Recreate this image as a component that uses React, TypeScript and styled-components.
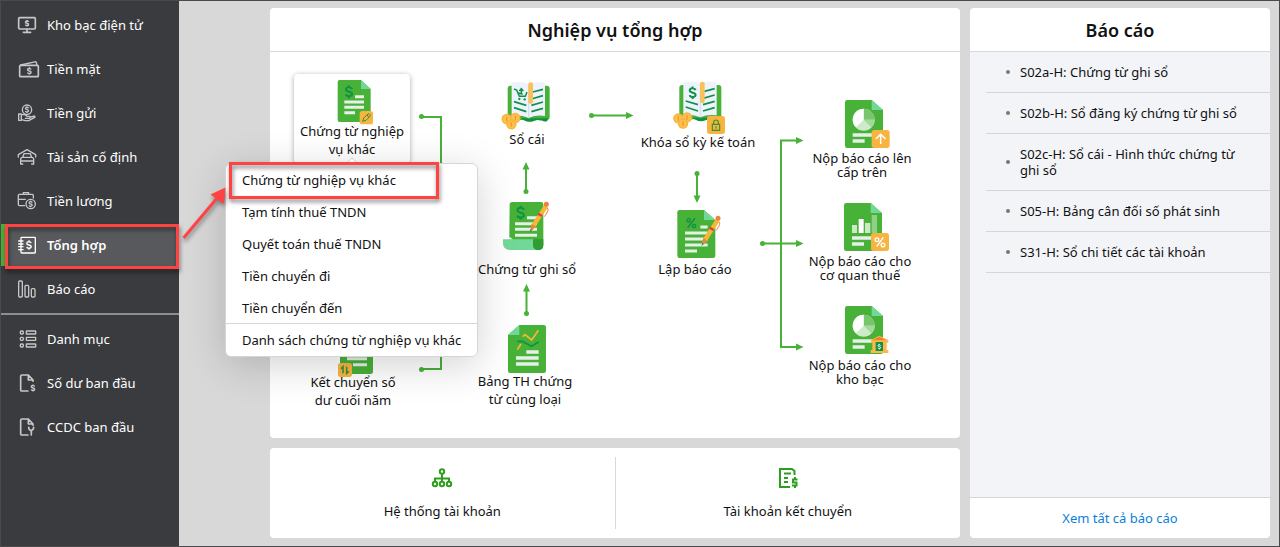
import React from 'react';
import styled, { createGlobalStyle, css } from 'styled-components';

const green = '#48b138';
const mint = '#72d898';
const deep = '#109246';
const amber = '#f8b637';
const pale = '#e6efe8';
const red = '#ff4343';

const GlobalStyle = createGlobalStyle`
  *, *::before, *::after { box-sizing: border-box; }
  body {
    margin: 0;
    font-family: "Noto Sans", "Open Sans", sans-serif;
    font-size: 13px;
    line-height: 18px;
    color: #111;
    background: #d8d8d8;
  }
  button {
    font: inherit;
    color: inherit;
    border: 0;
    padding: 0;
    margin: 0;
    background: none;
    cursor: pointer;
  }
  a { text-decoration: none; color: inherit; }
  ul { list-style: none; margin: 0; padding: 0; }
  h2 { margin: 0; }
`;

const Shell = styled.div`
  display: grid;
  grid-template-columns: 178px minmax(0, 1fr);
  min-height: 100vh;
  border: 1px solid #4a494b;
`;

const Sidebar = styled.nav`
  display: flex;
  flex-direction: column;
  gap: 2px;
  padding-top: 3px;
  background: #3a3b3e;
`;

const SideDivider = styled.hr`
  width: 100%;
  height: 2px;
  margin: 1px 0;
  border: 0;
  background: #8e8f93;
`;

const SideLink = styled.a<{ $active?: boolean }>`
  position: relative;
  display: flex;
  align-items: center;
  gap: 7px;
  height: 42px;
  padding-left: 15px;
  color: #fff;
  ${(p) =>
    p.$active &&
    css`
      font-weight: 600;
      background: #58595c;
      box-shadow: inset 4px 0 0 ${green};
    `}
`;

const SideIcon = styled.svg<{ $bright?: boolean }>`
  flex: none;
  width: 24px;
  height: 20px;
  fill: none;
  stroke: ${(p) => (p.$bright ? '#fff' : '#c6c7c9')};
  stroke-width: 5;
  stroke-linejoin: round;
  stroke-linecap: round;
`;

const Marker = styled.span`
  position: absolute;
  border: 3px solid ${red};
  filter: drop-shadow(1px 3px 2px rgba(0, 0, 0, 0.5));
  pointer-events: none;
`;

const SideMarker = styled(Marker)`
  inset: 0 0 -3px 4px;
`;

const MenuMarker = styled(Marker)`
  left: 3px;
  top: -2px;
  width: 210px;
  height: 37px;
`;

const Main = styled.main`
  display: grid;
  grid-template-columns: minmax(0, 1fr) 300px;
  gap: 10px;
  padding: 7px 9px 8px 91px;
`;

const Workspace = styled.div`
  display: flex;
  flex-direction: column;
  gap: 10px;
`;

const Panel = styled.section`
  display: flex;
  flex-direction: column;
  border-radius: 4px;
  background: #fff;
`;

const ProcessPanel = styled(Panel)`
  flex: 1;
`;

const PanelTitle = styled.h2`
  padding: 10px 0 9px;
  border-bottom: 1px solid #d9d9d9;
  font-size: 18px;
  line-height: 24px;
  font-weight: 600;
  text-align: center;
`;

const Canvas = styled.div`
  position: relative;
  width: 690px;
  height: 386px;
  margin: 0 auto;
`;

const Wires = styled.svg`
  position: absolute;
  inset: 0;
  width: 690px;
  height: 386px;
  fill: none;
  stroke: ${green};
  stroke-width: 2;
`;

const NodeButton = styled.button<{ $x: number; $y: number; $raised?: boolean; $tight?: boolean }>`
  position: absolute;
  left: ${(p) => p.$x}px;
  top: ${(p) => p.$y}px;
  display: flex;
  flex-direction: column;
  align-items: center;
  width: 116px;
  line-height: ${(p) => (p.$tight ? 14 : 18)}px;
  text-align: center;
  white-space: pre-line;
  ${(p) =>
    p.$raised &&
    css`
      height: 89px;
      padding-top: 6px;
      border-radius: 4px;
      background: #fff;
      box-shadow: 0 1px 5px rgba(0, 0, 0, 0.35);
    `}
`;

const NodeArt = styled.svg<{ $h: number }>`
  flex: none;
  width: 60px;
  height: ${(p) => p.$h}px;
  overflow: visible;
`;

const Menu = styled.div`
  position: absolute;
  left: -45px;
  top: 111px;
  z-index: 2;
  width: 253px;
  border: 1px solid #d6d6d6;
  border-radius: 6px;
  background: #fff;
  box-shadow: 0 8px 40px rgba(0, 0, 0, 0.18);
  &::before {
    content: '';
    position: absolute;
    left: 122px;
    top: -5px;
    width: 8px;
    height: 8px;
    border: 1px solid #d6d6d6;
    border-right: 0;
    border-bottom: 0;
    background: #fff;
    transform: rotate(45deg);
  }
`;

const MenuItem = styled.button<{ $ruled?: boolean }>`
  position: relative;
  display: block;
  width: 100%;
  height: 32px;
  padding: 0 16px;
  text-align: left;
  white-space: nowrap;
  border-bottom: ${(p) => (p.$ruled ? '1px solid #d6d6d6' : '0')};
`;

const Pointer = styled.svg`
  position: absolute;
  left: -90px;
  top: 130px;
  z-index: 3;
  width: 50px;
  height: 60px;
  filter: drop-shadow(1px 3px 2px rgba(0, 0, 0, 0.4));
  pointer-events: none;
`;

const ShortcutPanel = styled(Panel)`
  flex-direction: row;
  height: 90px;
  padding: 9px 0;
`;

const Shortcut = styled.button`
  flex: 1;
  display: flex;
  flex-direction: column;
  align-items: center;
  gap: 12px;
  padding-top: 9px;
  &:first-child {
    border-right: 1px solid #d9d9d9;
  }
`;

const ShortcutIcon = styled.svg`
  width: 24px;
  height: 24px;
  fill: none;
  stroke: #2ca01c;
  stroke-width: 2;
`;

const ReportList = styled.ul`
  flex: 1;
  padding-left: 16px;
  background: #f3f4f8;
`;

const ReportItem = styled.li`
  border-bottom: 1px solid #d6d6d6;
`;

const ReportLink = styled.a`
  display: flex;
  align-items: center;
  gap: 10px;
  padding: 12px 24px 12px 20px;
  line-height: 16px;
  &::before {
    content: '';
    flex: none;
    width: 4px;
    height: 4px;
    border-radius: 50%;
    background: #777;
  }
`;

const ReportFooter = styled.footer`
  padding: 11px 0;
  border-top: 1px solid #d6d6d6;
  text-align: center;
  color: #0a7fd9;
`;

/* ---------- drawing helpers ---------- */

const Dollar = ({ x, y, s = 1, w = 4, c }: { x: number; y: number; s?: number; w?: number; c?: string }) => (
  <path
    d="M7 -6C5 -12 -7 -12 -7 -5C-7 2 7 -2 7 5C7 12 -6 12 -7 6M0 -15V-10M0 10V15"
    transform={`translate(${x} ${y}) scale(${s})`}
    fill="none"
    stroke={c}
    strokeWidth={w / s}
    strokeLinecap="butt"
  />
);

const Sheet = ({ x, y, w = 114, h = 144 }: { x: number; y: number; w?: number; h?: number }) => (
  <>
    <path
      d={`M${x + 7} ${y}H${x + w - 34}L${x + w} ${y + 30}V${y + h - 7}q0 7 -7 7H${x + 7}q-7 0 -7 -7V${y + 7}q0 -7 7 -7Z`}
      fill={green}
    />
    <path d={`M${x + w - 34} ${y}L${x + w} ${y + 30}H${x + w - 34}Z`} fill={mint} />
  </>
);

const Pen = ({ x, y }: { x: number; y: number }) => (
  <g transform={`translate(${x} ${y})`}>
    <path d="M50 17L54 22Q56 28 43 45" fill="none" stroke="#f0803c" strokeWidth="3" />
    <path d="M43 9L54 16L16 76L2 88L4 69Z" fill={amber} />
    <path d="M26 33L38 40L34 46L22 39Z" fill="#e23c3c" />
    <path d="M5 67L16 74L8 84L1 88Z" fill="#f0803c" />
    <path d="M2 82L6 85L-1 91Z" fill={deep} />
    <circle cx="49" cy="8" r="7.500" fill="#f0803c" />
  </g>
);

const Coin = ({ x, y }: { x: number; y: number }) => (
  <g>
    <circle cx={x} cy={y} r="15.500" fill={amber} />
    <circle cx={x} cy={y} r="11" fill="#fcc054" />
    <path d={`M${x} ${y - 7}V${y + 7}`} stroke="#ee9a2e" strokeWidth="4" />
  </g>
);

const Book = ({ x, y, children }: { x: number; y: number; children?: React.ReactNode }) => (
  <g transform={`translate(${x} ${y})`}>
    <path d="M10 10H118Q127 10 127 18V104Q127 112 119 113H78Q64 120 50 113H10Q1 112 1 104V18Q1 10 10 10Z" fill={green} />
    <path d="M40 108H60Q64 112 70 108H122L120 116Q112 120 106 115L90 113L80 116Q64 122 50 114Z" fill={deep} />
    <path d="M13 1Q40 -4 64 5Q86 -4 113 1V101Q86 97 64 107Q40 97 13 101Z" fill="#eef2fc" />
    <path d="M64 5V106" stroke="#c4cfe2" strokeWidth="2" />
    <path
      d="M20 58L57 69M20 76L57 88M76 29L107 21M72 50L107 40M72 69L107 59M72 88L107 78"
      stroke={deep}
      strokeWidth="5"
    />
    <rect x="63" y="0" width="14" height="64" rx="6" fill="#fac05a" />
    {children}
    <Coin x={-2} y={110} />
    <Coin x={24} y={107} />
    <Coin x={12} y={126} />
  </g>
);

const Badge = ({ x, y, s = 54, children }: { x: number; y: number; s?: number; children?: React.ReactNode }) => (
  <g transform={`translate(${x} ${y})`}>
    <rect width={s} height={s} rx="8" fill="#f8b440" />
    {children}
  </g>
);

const Pie = ({ x, y }: { x: number; y: number }) => (
  <g transform={`translate(${x} ${y})`}>
    <circle r="33" fill="#cdebc8" />
    <path d="M0 0V-33A33 33 0 0 1 33 0Z" fill="#79c56e" />
    <path d="M0 0H33A33 33 0 0 1 23 23Z" fill="#a4d99c" />
    <path d="M0 0V-33A33 33 0 0 0 -23 23Z" fill="#fff" />
  </g>
);

const Bars = ({ d, w = 9 }: { d: string; w?: number }) => <path d={d} stroke={pale} strokeWidth={w} fill="none" />;

/* ---------- process nodes ---------- */

type NodeSpec = {
  label: string;
  x: number;
  y: number;
  h: number;
  box: string;
  raised?: boolean;
  tight?: boolean;
  art: React.ReactNode;
};

const nodes: NodeSpec[] = [
  {
    label: 'Chứng từ nghiệp\nvụ khác',
    x: 24, y: 22, h: 42, box: '186 240 180 126', raised: true,
    art: (
      <>
        <path d="M239 240H303L332 267V360q0 6 -6 6H239q-6 0 -6 -6V246q0 -6 6 -6Z" fill={green} />
        <path d="M303 240L332 267H303Z" fill={mint} />
        <Dollar x={267} y={275} s={1.3} w={6} c={deep} />
        <Bars d="M285 290H312M253 306H312M253 322H312M253 338H285" />
        <Badge x={299} y={333} s={40}>
          <path d="M9 31L12 21L25 9Q29 7 31 11Q33 14 30 17L19 28ZM22 12L28 19" fill="none" stroke="#3c8f32" strokeWidth="3" />
        </Badge>
      </>
    ),
  },
  {
    label: 'Kết chuyển số\ndư cuối năm',
    x: 25, y: 280, h: 41, box: '309 546 180 123',
    art: (
      <>
        <Sheet x={360} y={546} w={99} h={126} />
        <Bars d="M381 612H441M381 626H441M399 644H441" />
        <Badge x={354} y={639} s={42}>
          <path d="M15 31V11L9 17M26 11V31L32 25" fill="none" stroke="#2e8f3a" strokeWidth="4.500" />
        </Badge>
      </>
    ),
  },
  {
    label: 'Sổ cái',
    x: 199, y: 30, h: 48, box: '81 66 180 144',
    art: (
      <Book x={112} y={67}>
        <path d="M20 20L28 23L36 42H54L59 29M31 31L46 36M42 19V36M36 26L42 19L48 26" fill="none" stroke={deep} strokeWidth="4.500" />
        <circle cx="36" cy="50" r="3.500" fill={deep} />
        <circle cx="52" cy="51" r="3.500" fill={deep} />
      </Book>
    ),
  },
  {
    label: 'Khóa sổ kỳ kế toán',
    x: 370, y: 29, h: 52, box: '114 63 180 156',
    art: (
      <>
        <Book x={147} y={65}>
          <Dollar x={41} y={33} s={1.25} w={6} c={deep} />
        </Book>
        <Badge x={231} y={168}>
          <path d="M16 25H38V43H16ZM20 25V19Q20 12 27 12Q34 12 34 19V25M27 31V38" fill="none" stroke="#3c8f32" strokeWidth="3.500" />
        </Badge>
      </>
    ),
  },
  {
    label: 'Chứng từ ghi sổ',
    x: 199, y: 150, h: 58, box: '81 36 180 174',
    art: (
      <>
        <path d="M127 36H213Q220 36 220 43V165Q220 180 205 180H118V140L119 44Q119 36 127 36Z" fill={green} />
        <path d="M99 148H189V165Q189 178 203 180H118Q99 178 99 160Z" fill={mint} />
        <path d="M189 148H220V165Q220 180 205 180Q189 178 189 165Z" fill="#2f9c34" />
        <path d="M118 140L128 148H118Z" fill="#fff" />
        <Dollar x={152} y={68} s={1.4} w={6} c={deep} />
        <Bars d="M171 83H201M135 101H201M135 118H201M135 136H201" />
        <Pen x={180} y={35} />
      </>
    ),
  },
  {
    label: 'Lập báo cáo',
    x: 367, y: 158, h: 50, box: '105 450 180 150',
    art: (
      <>
        <Sheet x={142} y={450} />
        <path d="M173 503L195 475" stroke={deep} strokeWidth="4.500" />
        <circle cx="176" cy="481" r="5" fill="none" stroke={deep} strokeWidth="4" />
        <circle cx="192" cy="498" r="5" fill="none" stroke={deep} strokeWidth="4" />
        <Bars d="M211 501H233M165 519H233M165 537H233M165 555H233M165 573H201" />
        <Pen x={215} y={467} />
      </>
    ),
  },
  {
    label: 'Bảng TH chứng\ntừ cùng loại',
    x: 197, y: 273, h: 47, box: '75 405 180 141',
    art: (
      <>
        <path d="M148 405H221q7 0 7 7V542q0 7 -7 7H121q-7 0 -7 -7V435Z" fill={green} />
        <path d="M148 405V435H114Z" fill={mint} />
        <path d="M142 479L153 462M158 440L165 434L185 450L205 421" fill="none" stroke={amber} strokeWidth="5" />
        <path d="M141 454H157L184 469L206 456" fill="none" stroke={deep} strokeWidth="5" />
        <Bars d="M169 486H206M138 504H206M138 522H206" w={11} />
      </>
    ),
  },
  {
    label: 'Nộp báo cáo lên\ncấp trên',
    x: 534, y: 48, h: 51, box: '126 60 180 153', tight: true,
    art: (
      <>
        <Sheet x={165} y={60} />
        <Pie x={221} y={119} />
        <Bars d="M188 165H246M188 183H224" w={11} />
        <Badge x={245} y={150}>
          <path d="M27 42V14M12 27L27 13L42 27" fill="none" stroke="#fff" strokeWidth="4.500" />
        </Badge>
      </>
    ),
  },
  {
    label: 'Nộp báo cáo cho\ncơ quan thuế',
    x: 532, y: 151, h: 51, box: '120 369 180 153', tight: true,
    art: (
      <>
        <Sheet x={162} y={369} />
        <path d="M186 435H201V459H186ZM225 429H241V459H225Z" fill="#c9eac4" />
        <path d="M206 417H221V459H206Z" fill="#fff" />
        <path d="M245 405H261V459H245Z" fill="#90cf88" />
        <Bars d="M186 474H244M186 492H222" w={11} />
        <Badge x={243} y={459}>
          <path d="M17 41L37 13" stroke="#fff" strokeWidth="4.500" />
          <circle cx="18" cy="20" r="5.500" fill="none" stroke="#fff" strokeWidth="4" />
          <circle cx="36" cy="36" r="5.500" fill="none" stroke="#fff" strokeWidth="4" />
        </Badge>
      </>
    ),
  },
  {
    label: 'Nộp báo cáo cho\nkho bạc',
    x: 532, y: 254, h: 52, box: '120 108 180 156', tight: true,
    art: (
      <>
        <Sheet x={165} y={108} />
        <Pie x={221} y={167} />
        <Bars d="M188 213H246M188 231H224" w={11} />
        <path d="M242 249V240H247V218H243V210L268 197L295 210V218H290V240H295V249Z" fill="#fbb84c" />
        <path d="M248 211L268 200L289 211Z" fill="#ee7f2d" />
        <rect x="257" y="216" width="22" height="27" fill={deep} />
        <Dollar x={268} y={230} s={0.55} w={3} c="#fff" />
      </>
    ),
  },
];

/* ---------- sidebar ---------- */

const SmallCoin = ({ x, y, r }: { x: number; y: number; r: number }) => (
  <>
    <circle cx={x} cy={y} r={r} strokeWidth="4" />
    <Dollar x={x} y={y} s={r / 21} w={4} />
  </>
);

const sideItems: { label: string; box: string; active?: boolean; divided?: boolean; art: React.ReactNode }[] = [
  {
    label: 'Kho bạc điện tử', box: '48 45 72 60',
    art: (
      <>
        <rect x="56" y="53" width="50" height="34" rx="3" />
        <path d="M81 88V97M70 97H92" />
        <Dollar x={81} y={70} s={0.65} w={4.5} />
      </>
    ),
  },
  {
    label: 'Tiền mặt', box: '48 177 72 60',
    art: (
      <>
        <rect x="59" y="196" width="56" height="34" rx="3" />
        <path d="M62 195L108 185L111 195" strokeWidth="4" />
        <Dollar x={88} y={213} s={0.75} w={4.5} />
      </>
    ),
  },
  {
    label: 'Tiền gửi', box: '48 309 72 60',
    art: (
      <>
        <SmallCoin x={81} y={329} r={14} />
        <path
          d="M56 342H64V361H56ZM64 344H74L82 349H90Q93 353 89 355H76M90 352L103 348Q107 350 103 353L86 362H76L64 359"
          strokeWidth="4"
        />
      </>
    ),
  },
  {
    label: 'Tài sản cố định', box: '48 441 72 60',
    art: (
      <path
        d="M55 471V464L81 449L107 464V471M68 472L72 461H91L95 472M62 491V477Q63 472 68 472H95Q100 472 101 477V491M62 483H101M62 492H68M95 492H101"
        strokeWidth="4"
      />
    ),
  },
  {
    label: 'Tiền lương', box: '48 573 72 60',
    art: (
      <>
        <path d="M74 617H58Q55 617 55 613V586Q55 583 58 583H97Q100 583 100 586V594M70 582V578H86V582M56 598H76" strokeWidth="4" />
        <SmallCoin x={92} y={612} r={14} />
      </>
    ),
  },
  {
    label: 'Tổng hợp', box: '48 60 72 60', active: true,
    art: (
      <>
        <rect x="63" y="67" width="43" height="47" rx="2" strokeWidth="4" />
        <path d="M56 78H69M56 87H69M56 95H69M56 104H69" strokeWidth="4" />
        <Dollar x={87} y={90} s={0.95} w={4} />
      </>
    ),
  },
  {
    label: 'Báo cáo', box: '48 192 72 60',
    art: (
      <>
        <rect x="56" y="198" width="11" height="48" rx="3" strokeWidth="4" />
        <rect x="75" y="211" width="11" height="35" rx="3" strokeWidth="4" />
        <rect x="94" y="221" width="11" height="25" rx="3" strokeWidth="4" />
      </>
    ),
  },
  {
    label: 'Danh mục', box: '48 342 72 60', divided: true,
    art: (
      <>
        {[348, 367, 387].map((y) => (
          <React.Fragment key={y}>
            <rect x="61" y={y} width="9" height="9" rx="3" strokeWidth="4" />
            <rect x="79" y={y} width="28" height="9" rx="1" strokeWidth="4" />
          </React.Fragment>
        ))}
      </>
    ),
  },
  {
    label: 'Số dư ban đầu', box: '48 474 72 60',
    art: (
      <>
        <path d="M84 528H65Q62 528 62 524V484Q62 480 66 480H85L99 495V499M85 480V495H99" />
        <Dollar x={99} y={519} s={0.7} w={4.5} />
      </>
    ),
  },
  {
    label: 'CCDC ban đầu', box: '48 606 72 60',
    art: (
      <path d="M84 660H65Q62 660 62 656V616Q62 612 66 612H85L99 627V631M85 612V627H99M86 637Q86 645 93 647Q101 645 101 637M94 647V660" />
    ),
  },
];

const menuItems = [
  'Chứng từ nghiệp vụ khác',
  'Tạm tính thuế TNDN',
  'Quyết toán thuế TNDN',
  'Tiền chuyển đi',
  'Tiền chuyển đến',
  'Danh sách chứng từ nghiệp vụ khác',
];

const reports = [
  'S02a-H: Chứng từ ghi sổ',
  'S02b-H: Sổ đăng ký chứng từ ghi sổ',
  'S02c-H: Sổ cái - Hình thức chứng từ ghi sổ',
  'S05-H: Bảng cân đối số phát sinh',
  'S31-H: Sổ chi tiết các tài khoản',
];

const Connectors = () => (
  <Wires viewBox="270 52 690 386" aria-hidden="true">
    <path d="M421 117H441V369H421M592 115.500H627M526 168V191M526.500 290V313M697 174V197M762 243.500H797M797 140.500H781V347H797" />
    <g fill={green} stroke="none">
      <circle cx="421.500" cy="116.500" r="2.500" />
      <circle cx="421.500" cy="369.500" r="2.500" />
      <circle cx="591.500" cy="115.500" r="2.500" />
      <circle cx="526" cy="191.500" r="2.500" />
      <circle cx="526.500" cy="313.500" r="2.500" />
      <circle cx="697" cy="173.500" r="2.500" />
      <circle cx="762.500" cy="243.500" r="2.500" />
      <path d="M626 112L633.500 115.500L626 119Z" />
      <path d="M522.500 169.500L526 162L529.500 169.500Z" />
      <path d="M523 291.500L526.500 284L530 291.500Z" />
      <path d="M693.500 195.500L697 203L700.500 195.500Z" />
      <path d="M796 137L803.500 140.500L796 144Z" />
      <path d="M796 240L803.500 243.500L796 247Z" />
      <path d="M796 343.500L803.500 347L796 350.500Z" />
    </g>
  </Wires>
);

export default function App() {
  return (
    <>
      <GlobalStyle />
      <Shell>
        <Sidebar>
          {sideItems.map((item) => (
            <React.Fragment key={item.label}>
              {item.divided && <SideDivider />}
              <SideLink href="#" $active={item.active}>
                <SideIcon viewBox={item.box} $bright={item.active} aria-hidden="true">
                  {item.art}
                </SideIcon>
                {item.label}
                {item.active && <SideMarker />}
              </SideLink>
            </React.Fragment>
          ))}
        </Sidebar>

        <Main>
          <Workspace>
            <ProcessPanel>
              <PanelTitle>Nghiệp vụ tổng hợp</PanelTitle>
              <Canvas>
                <Connectors />
                {nodes.map((n) => (
                  <NodeButton key={n.label} type="button" $x={n.x} $y={n.y} $raised={n.raised} $tight={n.tight}>
                    <NodeArt viewBox={n.box} $h={n.h} aria-hidden="true">
                      {n.art}
                    </NodeArt>
                    {n.label}
                  </NodeButton>
                ))}
                <Menu>
                  {menuItems.map((label, i) => (
                    <MenuItem key={label} type="button" $ruled={i === 4}>
                      {label}
                      {i === 0 && <MenuMarker />}
                    </MenuItem>
                  ))}
                </Menu>
                <Pointer viewBox="180 182 50 60" aria-hidden="true">
                  <path d="M183.500 238L218 197" stroke={red} strokeWidth="3" />
                  <path d="M225.500 187.500L210.500 194.500L224 204Z" fill={red} />
                </Pointer>
              </Canvas>
            </ProcessPanel>

            <ShortcutPanel>
              <Shortcut type="button">
                <ShortcutIcon viewBox="0 0 24 24" aria-hidden="true">
                  <circle cx="12" cy="5.500" r="2.200" />
                  <path d="M12 8V16M5 16V12.500H19V16" />
                  <circle cx="5" cy="18" r="2.200" />
                  <circle cx="12" cy="18" r="2.200" />
                  <circle cx="19" cy="18" r="2.200" />
                </ShortcutIcon>
                Hệ thống tài khoản
              </Shortcut>
              <Shortcut type="button">
                <ShortcutIcon viewBox="0 0 24 24" aria-hidden="true">
                  <path d="M14 21H4V3H16L18.500 5V9M8 7.500H15M8 12H12M8 16H12" />
                  <path d="M21.500 13.500H17V16.500H20.500V19.500H16M19 11V13.500M19 19.500V22" />
                </ShortcutIcon>
                Tài khoản kết chuyển
              </Shortcut>
            </ShortcutPanel>
          </Workspace>

          <Panel>
            <PanelTitle>Báo cáo</PanelTitle>
            <ReportList>
              {reports.map((r) => (
                <ReportItem key={r}>
                  <ReportLink href="#">{r}</ReportLink>
                </ReportItem>
              ))}
            </ReportList>
            <ReportFooter>
              <a href="#">Xem tất cả báo cáo</a>
            </ReportFooter>
          </Panel>
        </Main>
      </Shell>
    </>
  );
}
